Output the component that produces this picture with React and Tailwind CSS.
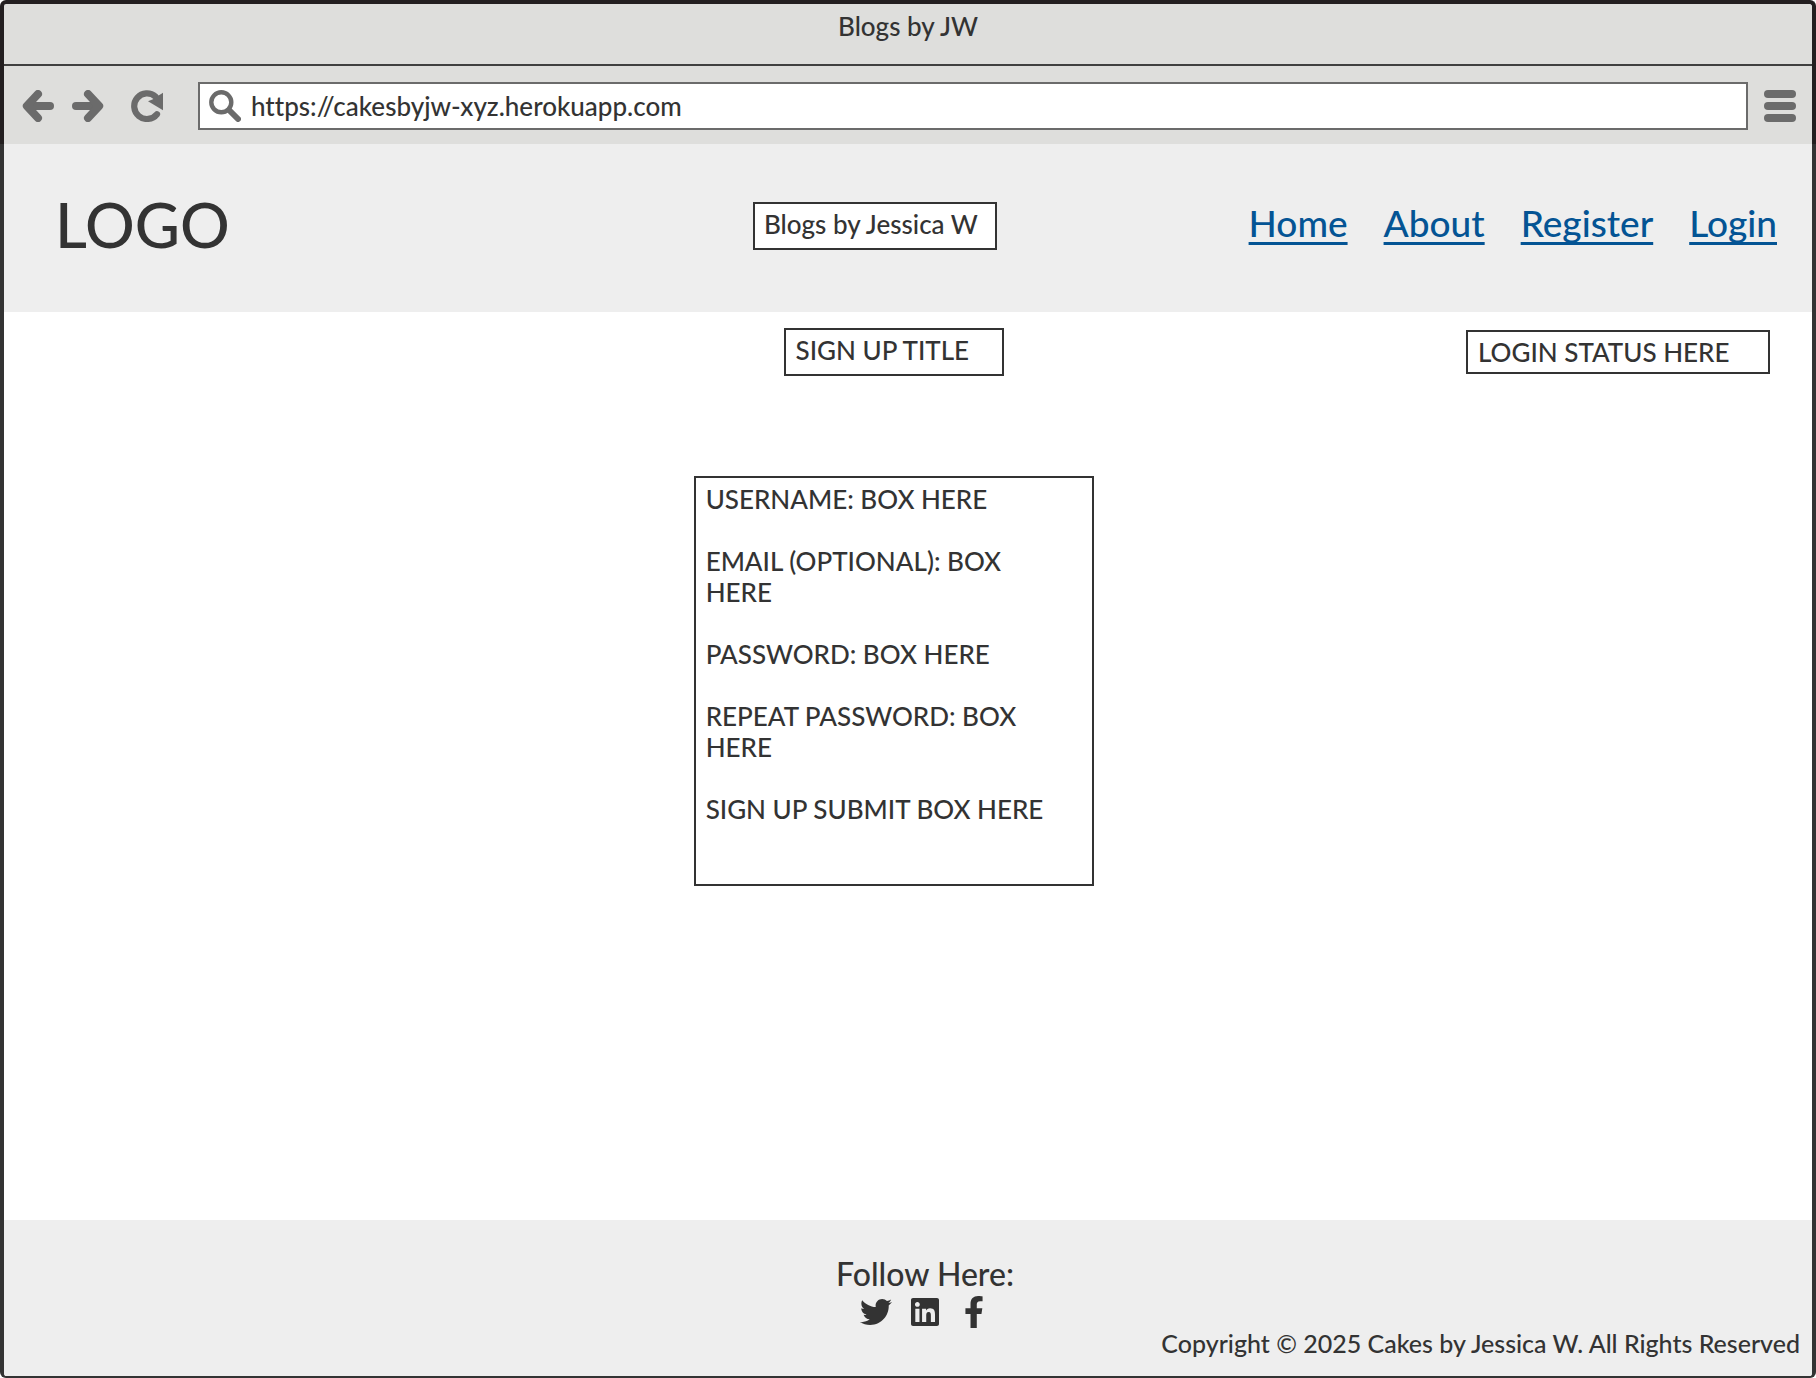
import React from "react";
import { FaTwitter, FaLinkedin, FaFacebookF } from "react-icons/fa";

const links = ["Home", "About", "Register", "Login"];

const fields = [
  "USERNAME: BOX HERE",
  "EMAIL (OPTIONAL): BOX HERE",
  "PASSWORD: BOX HERE",
  "REPEAT PASSWORD: BOX HERE",
  "SIGN UP SUBMIT BOX HERE",
];

const socials = [
  { name: "Twitter", Icon: FaTwitter },
  { name: "LinkedIn", Icon: FaLinkedin },
  { name: "Facebook", Icon: FaFacebookF },
];

function ArrowIcon({ className }) {
  return (
    <svg viewBox="0 0 32 32" className={className} fill="none" stroke="currentColor" strokeWidth="8" strokeLinecap="round" strokeLinejoin="round" aria-hidden="true">
      <path d="M28 16H6" />
      <path d="M16 4 4.8 16 16 28" />
    </svg>
  );
}

function ReloadIcon() {
  return (
    <svg viewBox="0 0 32 32" className="size-8" aria-hidden="true">
      <path d="M26 24.2A12.8 12.8 0 1 1 24.5 6.6" fill="none" stroke="currentColor" strokeWidth="6.2" strokeLinecap="round" />
      <path d="M32 2.8v17.4L17 11.3l5-2L26 6.5z" fill="currentColor" />
    </svg>
  );
}

function SearchIcon() {
  return (
    <svg viewBox="0 0 32 32" className="size-8 shrink-0 text-[#6b6b6b]" fill="none" stroke="currentColor" aria-hidden="true">
      <circle cx="12.3" cy="12.3" r="10" strokeWidth="4.4" />
      <path d="M20.5 20.5 29 29" strokeWidth="6" strokeLinecap="round" />
    </svg>
  );
}

function MenuIcon() {
  return (
    <svg viewBox="0 0 32 32" className="size-8" fill="currentColor" aria-hidden="true">
      <rect y="0" width="32" height="8" rx="4" />
      <rect y="12" width="32" height="8" rx="4" />
      <rect y="24" width="32" height="8" rx="4" />
    </svg>
  );
}

function BrowserChrome() {
  return (
    <div className="rounded-t-md border-x-4 border-t-4 border-[#231f20] bg-[#dededc]">
      <div className="h-[62px] border-b-2 border-[#404040] pt-[7px] text-center">Blogs by JW</div>
      <div className="flex items-center pt-4 pr-4 pb-[14px] pl-[18px] text-[#6b6b6b]">
        <button type="button" aria-label="Back">
          <ArrowIcon className="size-8" />
        </button>
        <button type="button" aria-label="Forward" className="ml-[18px]">
          <ArrowIcon className="size-8 rotate-180" />
        </button>
        <button type="button" aria-label="Reload" className="ml-[27px]">
          <ReloadIcon />
        </button>
        <div className="mr-4 ml-[35px] flex h-12 flex-1 items-center gap-[10px] border-2 border-[#6b6b6b] bg-white pr-2 pl-[9px]">
          <SearchIcon />
          <input
            type="text"
            aria-label="Address"
            defaultValue="https://cakesbyjw-xyz.herokuapp.com"
            className="min-w-0 flex-1 bg-transparent text-[#333] outline-none [font-variant-ligatures:none]"
          />
        </div>
        <button type="button" aria-label="Menu">
          <MenuIcon />
        </button>
      </div>
    </div>
  );
}

function SiteHeader() {
  return (
    <header className="grid grid-cols-[17fr_auto_19fr] items-start bg-[#eee] pt-[50px] pr-[35px] pb-[58px] pl-[51px]">
      <div className="text-[62px] leading-[60px]">LOGO</div>
      <div className="mt-2 flex h-12 w-[244px] items-center border-2 border-[#333] bg-white px-[9px] pb-1 whitespace-nowrap">
        Blogs by Jessica W
      </div>
      <nav className="mt-2 flex justify-end gap-9 text-[37px] leading-[42px] text-[#045494]">
        {links.map((label) => (
          <a key={label} href="#" className="underline decoration-[3px] underline-offset-[5px] [text-decoration-skip-ink:none]">
            {label}
          </a>
        ))}
      </nav>
    </header>
  );
}

function SignUp() {
  return (
    <main className="flex-1 bg-white">
      <div className="grid grid-cols-[27fr_220px_28fr] items-center pt-4">
        <h1 className="col-start-2 flex h-12 items-center border-2 border-[#333] px-[10px] pb-1 whitespace-nowrap">SIGN UP TITLE</h1>
        <div className="mr-[42px] flex h-11 w-[304px] items-center justify-self-end border-2 border-[#333] px-[10px] whitespace-nowrap">
          LOGIN STATUS HERE
        </div>
      </div>
      <div className="mt-[100px] grid grid-cols-[24fr_400px_25fr]">
        <section className="col-start-2 flex flex-col gap-[31px] border-2 border-[#333] pt-[6px] pr-7 pb-[59px] pl-[10px]">
          {fields.map((text) => (
            <p key={text}>{text}</p>
          ))}
        </section>
      </div>
    </main>
  );
}

function SiteFooter() {
  return (
    <footer className="bg-[#eee] pt-9 pb-[18px]">
      <div className="flex flex-col items-center gap-1 pl-[34px]">
        <p className="text-[32px] leading-9">Follow Here:</p>
        <div className="flex gap-[17px]">
          {socials.map(({ name, Icon }) => (
            <a key={name} href="#" aria-label={name}>
              <Icon className="size-8" />
            </a>
          ))}
        </div>
      </div>
      <p className="pr-3 text-right text-[25px] leading-[30px]">Copyright © 2025 Cakes by Jessica W. All Rights Reserved</p>
    </footer>
  );
}

export default function App() {
  return (
    <div className="flex min-h-screen flex-col font-['Lato',sans-serif] text-[26px] leading-[31px] font-medium text-[#333]">
      <BrowserChrome />
      <div className="flex flex-1 flex-col overflow-hidden rounded-b-md border-x-4 border-b-2 border-[#333]">
        <SiteHeader />
        <SignUp />
        <SiteFooter />
      </div>
    </div>
  );
}
